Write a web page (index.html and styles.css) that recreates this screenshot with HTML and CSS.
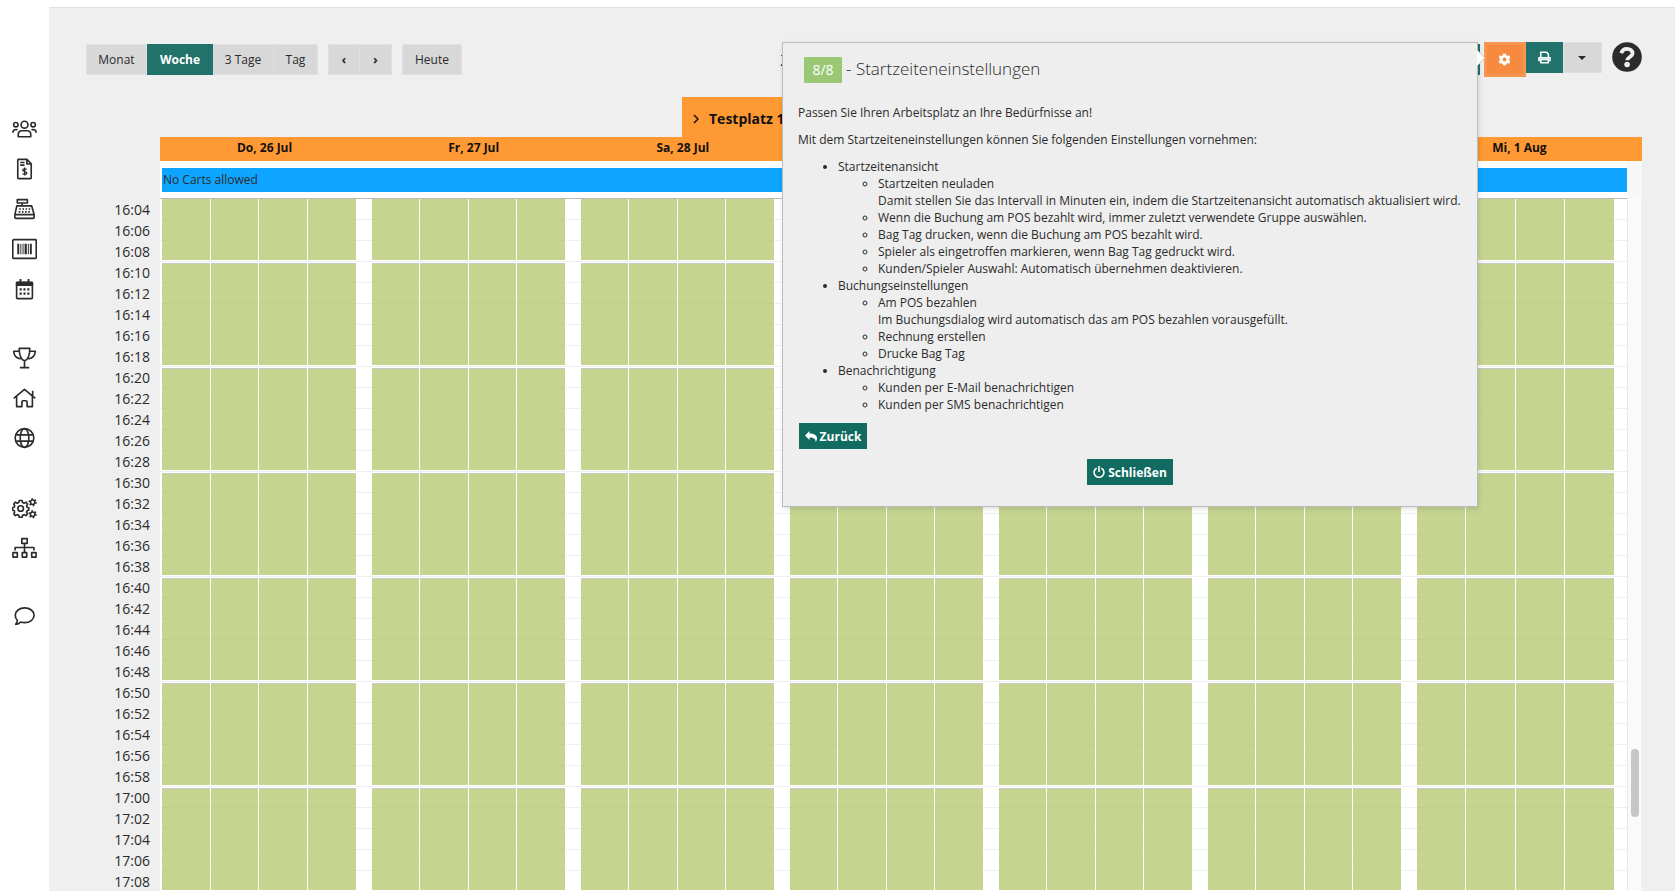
FILE: index.html
```html
<!DOCTYPE html>
<html lang="de">
<head>
<meta charset="utf-8">
<title>Startzeiten</title>
<link rel="stylesheet" href="styles.css">
</head>
<body>
<div class="app">
  <nav class="sidebar">
    <svg class="nav-icon" viewBox="0 0 26 22"><circle cx="13" cy="6.5" r="3.6"/><circle cx="4" cy="6.5" r="2.3"/><circle cx="22" cy="6.5" r="2.3"/><path d="M6.500 19v-2.200c0-2.200 1.400-4 3.500-4h6c2.100 0 3.500 1.800 3.500 4V19zM.9 14.800c0-2 1.100-3.300 3.400-3.300l1.500.3M25.100 14.800c0-2-1.100-3.300-3.400-3.300l-1.500.3"/></svg>
    <svg class="nav-icon" viewBox="0 0 26 22"><path d="M6.500 1h9l4.500 4.500V20q0 1-1 1h-12q-1 0-1-1V2q0-1 .5-1zM15.500 1v4.800H20M8.500 4.200h4.500M8.500 7h4.500"/><path stroke-width="1.400" d="M15.200 11.500c-.5-.9-4-1-4 .7s4.200 1 4.200 2.900-3.700 1.800-4.300.5M13.200 9.500v8.300"/></svg>
    <svg class="nav-icon" viewBox="0 0 26 22"><path d="M5.500 1.200h10.500v3.500H5.500zM10.500 5v3M5 7.800h15.500l2.500 9v3q0 1-1 1H4q-1 0-1-1v-3zM3.500 16.800h19"/><path d="M7.500 11h11.500M7 14h12" stroke-dasharray="1.700 1.600"/></svg>
    <svg class="nav-icon" viewBox="0 0 26 22"><rect x=".8" y="1.300" width="24.400" height="19.400" rx="1"/><path class="solid" d="M5.500 5.500h2v11h-2zM8.700 5.500h1v11h-1zM11 5.500h1v11h-1zM13.100 5.500h2.300v11h-2.300zM16.500 5.500h1v11h-1zM18.600 5.500h2v11h-2z"/></svg>
    <svg class="nav-icon" viewBox="0 0 26 22"><rect x="4.800" y="4" width="16.400" height="17" rx="1"/><path class="solid" d="M4 3.500h18v4.300H4zM7.800 .5h2v4h-2zM16.200 .5h2v4h-2zM7.900 10.300h2.200v2.200h-2.200zM11.900 10.300h2.200v2.200h-2.200zM15.900 10.300h2.200v2.200h-2.200zM7.900 14.700h2.200v2.200h-2.200zM11.900 14.700h2.200v2.200h-2.200zM15.900 14.700h2.200v2.200h-2.200z"/></svg>
    <svg class="nav-icon gap-before" viewBox="0 0 26 22"><path d="M7.500 1h11c0 7-1.500 11.500-5.500 13C9 12.500 7.500 8 7.500 1zM7.500 4H1.800c0 4.500 2.200 7 7.200 8M18.500 4h5.700c0 4.500-2.200 7-7.200 8M13 14v6.500M8.200 21h9.600"/></svg>
    <svg class="nav-icon" viewBox="0 0 26 22"><path d="M1.800 11.500L13 2l11.200 9.500M4.800 9.500v10.500h5.500v-5q0-1.200 1.200-1.200h3q1.200 0 1.200 1.200v5h5.500V9.500M21.500 3.500v5.200"/></svg>
    <svg class="nav-icon" viewBox="0 0 26 22"><circle cx="13" cy="11" r="9.700"/><ellipse cx="13" cy="11" rx="4.500" ry="9.700"/><path d="M4.300 7.800h17.400M4.300 14.200h17.400"/></svg>
    <svg class="nav-icon gap-before" viewBox="0 0 26 22"><circle cx="9" cy="11.500" r="2.900"/><path d="M7.500 3.200h3l.5 2.200 1.600.7 2-1.200 1.500 2-.9 1.800.5 1.600 1.800.5v2.300l-1.800.7-.5 1.500.9 1.900-1.600 1.700-1.900-1-1.600.7-.5 2h-3l-.5-2-1.600-.7-1.900 1-1.600-1.700.9-1.900-.5-1.500-1.800-.7v-2.300l1.800-.5.500-1.600-.9-1.800 1.500-2 2 1.200 1.600-.7z"/><circle cx="21.500" cy="5" r="2.300"/><circle cx="21.500" cy="17.500" r="2.300"/><circle cx="21.500" cy="5" r="3.500" stroke-dasharray="1.600 2.060"/><circle cx="21.500" cy="17.500" r="3.500" stroke-dasharray="1.600 2.060"/></svg>
    <svg class="nav-icon" viewBox="0 0 26 22"><path d="M10.200 1.200h5.600v5h-5.600zM1 15.800h4.500v4.700H1zM10.700 15.800h4.600v4.700h-4.600zM20.500 15.800H25v4.700h-4.500zM13 6v9.500M3.200 13.500v-3h19.600v3"/></svg>
    <svg class="nav-icon gap-before" viewBox="0 0 26 22"><path d="M13.200 1.500c5.400 0 9.800 3.400 9.800 7.700s-4.400 7.700-9.800 7.700c-1.600 0-2.700-.2-4-.7-1.500 1.600-3.500 2.400-5.400 2.400 1.100-1.200 1.700-2.500 1.700-4.200-1.300-1.400-2.100-3.200-2.100-5.200 0-4.300 4.400-7.700 9.800-7.700z"/></svg>
  </nav>
  <main class="main">
    <header class="toolbar">
      <div class="group">
        <button class="btn w-monat">Monat</button><button class="btn active w-woche">Woche</button><button class="btn w-drei">3 Tage</button><button class="btn w-tag">Tag</button>
      </div>
      <div class="group"><button class="btn arrow">‹</button><button class="btn arrow">›</button></div>
      <button class="btn w-heute">Heute</button>
      <div class="period">26 Jul – 1 Aug 2018</div>
      <div class="tools">
        <button class="tool covered"></button>
        <span class="highlight"><button class="tool gear"><svg viewBox="0 0 14 14" width="13" height="13"><path fill="#fff" fill-rule="evenodd" d="M5.400 .8h3.200l.4 1.800 1 .5 1.800-.6 1.500 2.500-1.300 1.200v1.700l1.300 1.200-1.500 2.500-1.800-.6-1 .6-.4 1.700H5.400L5 11.600l-1-.6-1.800.6L.7 9.100 2 7.900V6.200L.7 5l1.500-2.500 1.800.6 1-.5zM7 4.900a2.100 2.100 0 100 4.200 2.100 2.100 0 000-4.200z"/></svg></button></span>
        <button class="tool print"><svg viewBox="0 0 13 13" width="13" height="13" fill="none" stroke="#fff" stroke-width="1.500"><path d="M2.800 6V1.200h5.700l1.900 1.900V6M2.800 9.500H1V6.800h11v2.700h-1.800M2.900 8.600h7.300v3.200H2.900z"/></svg></button>
        <button class="tool drop"><span class="caret"></span></button>
        <svg class="help" viewBox="0 0 30 30"><circle cx="15" cy="15" r="14.800" fill="#2b2b2b"/><path d="M9.300 11.300c.9-3.400 3-4.400 5.700-4.400 3.100 0 5.500 1.700 5.500 4.400 0 3.700-5.200 3.700-5.200 7" fill="none" stroke="#efefef" stroke-width="3.800"/><circle cx="15.100" cy="22.500" r="2.800" fill="#efefef"/></svg>
      </div>
    </header>
    <section class="calendar">
      <div class="times" id="times"></div>
      <div class="board">
        <div class="place"><svg width="6" height="10" viewBox="0 0 6 10"><path d="M1 1l4 4-4 4" fill="none" stroke="#111" stroke-width="1.500"/></svg>Testplatz 1</div>
        <div class="days"><span>Do, 26 Jul</span><span>Fr, 27 Jul</span><span>Sa, 28 Jul</span><span>So, 29 Jul</span><span>Mo, 30 Jul</span><span>Di, 31 Jul</span><span>Mi, 1 Aug</span></div>
        <div class="allday"><div class="notice">No Carts allowed</div></div>
        <div class="body"><div class="grid" id="grid"></div><div class="scroll"><div class="thumb"></div></div></div>
      </div>
    </section>
  </main>
</div>
<aside class="tour">
  <h3><span class="badge">8/8</span><span class="heading">- Startzeiteneinstellungen</span></h3>
  <p>Passen Sie Ihren Arbeitsplatz an Ihre Bedürfnisse an!</p>
  <p>Mit dem Startzeiteneinstellungen können Sie folgenden Einstellungen vornehmen:</p>
  <ul>
    <li>Startzeitenansicht
      <ul><li>Startzeiten neuladen<br>Damit stellen Sie das Intervall in Minuten ein, indem die Startzeitenansicht automatisch aktualisiert wird.</li><li>Wenn die Buchung am POS bezahlt wird, immer zuletzt verwendete Gruppe auswählen.</li><li>Bag Tag drucken, wenn die Buchung am POS bezahlt wird.</li><li>Spieler als eingetroffen markieren, wenn Bag Tag gedruckt wird.</li><li>Kunden/Spieler Auswahl: Automatisch übernehmen deaktivieren.</li></ul></li>
    <li>Buchungseinstellungen
      <ul><li>Am POS bezahlen<br>Im Buchungsdialog wird automatisch das am POS bezahlen vorausgefüllt.</li><li>Rechnung erstellen</li><li>Drucke Bag Tag</li></ul></li>
    <li>Benachrichtigung
      <ul><li>Kunden per E-Mail benachrichtigen</li><li>Kunden per SMS benachrichtigen</li></ul></li>
  </ul>
  <button class="action back"><svg width="12" height="11" viewBox="0 0 12 11"><path fill="#fff" d="M4.500 0v2.500C9 2.500 12 4 12 7.500c0 1.500-.6 2.600-1.500 3.500.5-3-1.500-4.500-6-4.500V9L0 4.500z"/></svg>Zurück</button>
  <div class="close-row"><button class="action close"><svg width="12" height="12" viewBox="0 0 12 12"><path fill="none" stroke="#fff" stroke-width="1.600" d="M3.700 2.100a4.900 4.900 0 1 0 4.600 0M6 0v6"/></svg>Schließen</button></div>
  <svg class="pointer" width="8" height="16" viewBox="0 0 8 16"><path d="M0 0l8 8-8 8z" fill="#fff"/><path d="M0 0l7.500 8L0 16" fill="none" stroke="#ccc"/></svg>
</aside>
<script src="app.js"></script>
</body>
</html>
```
FILE: styles.css
```css
* { box-sizing: border-box; }
body { margin: 0; height: 891px; overflow: hidden; background: #fff; color: #2b2b2b; font: 12px/17px "Open Sans", "Noto Sans", sans-serif; }
button { font: inherit; color: inherit; margin: 0; padding: 0; border: 0; border-radius: 0; }
.app { display: flex; height: 891px; padding-top: 7px; }
.sidebar { width: 49px; padding: 110.5px 0 0 12px; display: flex; flex-direction: column; gap: 18px; }
.nav-icon { width: 25px; height: 22px; flex: none; fill: none; stroke: #2b2b2b; stroke-width: 1.7; stroke-linejoin: round; }
.nav-icon .solid { fill: #2b2b2b; stroke: none; }
.gap-before { margin-top: 29.6px; }
.main { flex: 1; background: #efefef; border-top: 1px solid #e2e2e2; display: flex; flex-direction: column; }
.toolbar { display: flex; height: 89px; padding: 34px 33px 0 37px; align-items: flex-start; }
.group { display: flex; margin: 2px 10px 0 0; }
.btn { height: 31px; background: #d8d8d8; border: 1px solid #e0e0e0; font-size: 12px; }
.btn + .btn { border-left-width: 0; }
.btn.active { background: #20726a; border-color: #20726a; color: #fff; font-weight: 700; }
.w-monat { width: 61px; }
.w-woche { width: 66px; padding-left: 1px; }
.w-drei { width: 61px; }
.w-tag { width: 44px; }
.arrow { width: 32px; font-size: 13px; font-weight: 700; }
.w-heute { width: 60px; margin-top: 2px; }
.period { margin: 4px 0 0 318px; font-size: 16px; line-height: 29px; white-space: nowrap; }
.tools { display: flex; margin-left: auto; align-items: flex-start; }
.tool { display: flex; align-items: center; justify-content: center; height: 31px; }
.covered { width: 40px; margin: 2px 4px 0 0; background: #20726a; }
.highlight { width: 42px; height: 35px; padding: 3px; background: #f79650; }
.gear { width: 36px; height: 29px; padding-right: 2px; background: #f68a3e; }
.print { width: 37px; background: #20726a; }
.drop { width: 39px; padding-right: 2px; background: #d8d8d8; border: 1px solid #e0e0e0; }
.caret { border: 4px solid transparent; border-top-color: #2b2b2b; border-bottom: 0; }
.help { width: 30px; height: 30px; margin-left: 10px; }
.calendar { display: flex; flex: 1; min-height: 0; }
.times { width: 111px; padding: 102px 10px 0 0; text-align: right; font-size: 14px; line-height: 21px; }
.board { width: 1482px; display: flex; flex-direction: column; }
.place { width: 438px; height: 40px; margin-left: 522px; padding: 3px 0 0 11px; display: flex; align-items: center; gap: 10px; background: #ff9933; color: #111; font-size: 14px; font-weight: 700; }
.place svg { width: 6px; height: 10px; }
.days { height: 24px; display: flex; background: #ff9933; padding: 0 18px 0 0; color: #111; font-size: 12px; font-weight: 700; line-height: 21px; text-align: center; }
.days span { flex: 1; }
.allday { height: 38px; background: linear-gradient(90deg, #fff 1467px, #f7f7f7 0); padding: 7px 15px 0 2px; }
.notice { height: 24px; padding-left: 1px; background: #0da5ff; font-size: 12px; line-height: 23px; }
.body { flex: 1; display: flex; min-height: 0; margin-top: -1px; }
.grid { width: 1467px; border-top: 1px solid #bbb; background: repeating-linear-gradient(#fff 0 20px, #f4f4f4 20px 21px); display: flex; position: relative; }
.grid::after { content: ""; position: absolute; inset: 0; background: repeating-linear-gradient(transparent 0 20px, rgba(0, 0, 0, .018) 20px 21px); }
.lane { display: flex; flex-direction: column; gap: 3px; margin-right: 1px; box-shadow: 1px 0 #fff; }
.lane:nth-child(4n+1) { margin-left: 15px; }
.lane:first-child { margin-left: 2px; }
.slot { flex: none; height: 102px; background: #c5d590; border-top: 1px solid #c9c9c9; }
.slot:first-child { height: 61px; border-top: 0; }
.scroll { width: 14px; background: #fafafa; border-left: 1px solid #e8e8e8; padding: 551px 0 0 3px; }
.thumb { width: 8px; height: 68px; border-radius: 4px; background: #c6c6c6; }
.tour { position: absolute; left: 782px; top: 42px; width: 696px; height: 465px; padding: 14px 14px 14px 15px; background: #eee; border: 1px solid #bbb; box-shadow: 1px 2px 5px rgba(0, 0, 0, .12); }
.tour h3 { margin: 0 0 21px 6px; height: 26px; display: flex; align-items: center; font-size: 17px; font-weight: 300; line-height: 26px; }
.heading { padding-bottom: 2px; }
.badge { width: 38px; height: 26px; margin-right: 4px; border-radius: 1px; background: #9bc874; color: #fff; font-size: 14px; font-weight: 400; text-align: center; }
.tour p { margin: 0 0 10px; white-space: nowrap; }
.tour ul { margin: 0; padding-left: 40px; white-space: nowrap; }
.action { height: 26px; display: flex; align-items: center; justify-content: center; gap: 3px; background: #126b61; color: #fff; font-size: 12px; font-weight: 700; }
.back { width: 68px; margin: 10px 0 0 1px; }
.close-row { display: flex; justify-content: center; margin-top: 10px; padding-right: 1px; }
.close { width: 86px; }
.pointer { position: absolute; left: 694px; top: 7px; }
```
FILE: app.js
```js
// Lane widths in pixels for the seven days, four players each.
const lanes = [
  [48, 47, 48, 48], [47, 48, 47, 48], [47, 48, 47, 48], [47, 48, 47, 48],
  [47, 48, 47, 48], [47, 48, 47, 48], [48, 49, 48, 49]
];
const grid = document.getElementById("grid");
for (const day of lanes) {
  for (const width of day) {
    const lane = document.createElement("div");
    lane.className = "lane";
    lane.style.width = width + "px";
    lane.innerHTML = '<div class="slot"></div>'.repeat(7);
    grid.append(lane);
  }
}
const times = document.getElementById("times");
for (let minute = 964; minute <= 1028; minute += 2) {
  const row = document.createElement("div");
  row.textContent = Math.floor(minute / 60) + ":" + String(minute % 60).padStart(2, "0");
  times.append(row);
}
```
